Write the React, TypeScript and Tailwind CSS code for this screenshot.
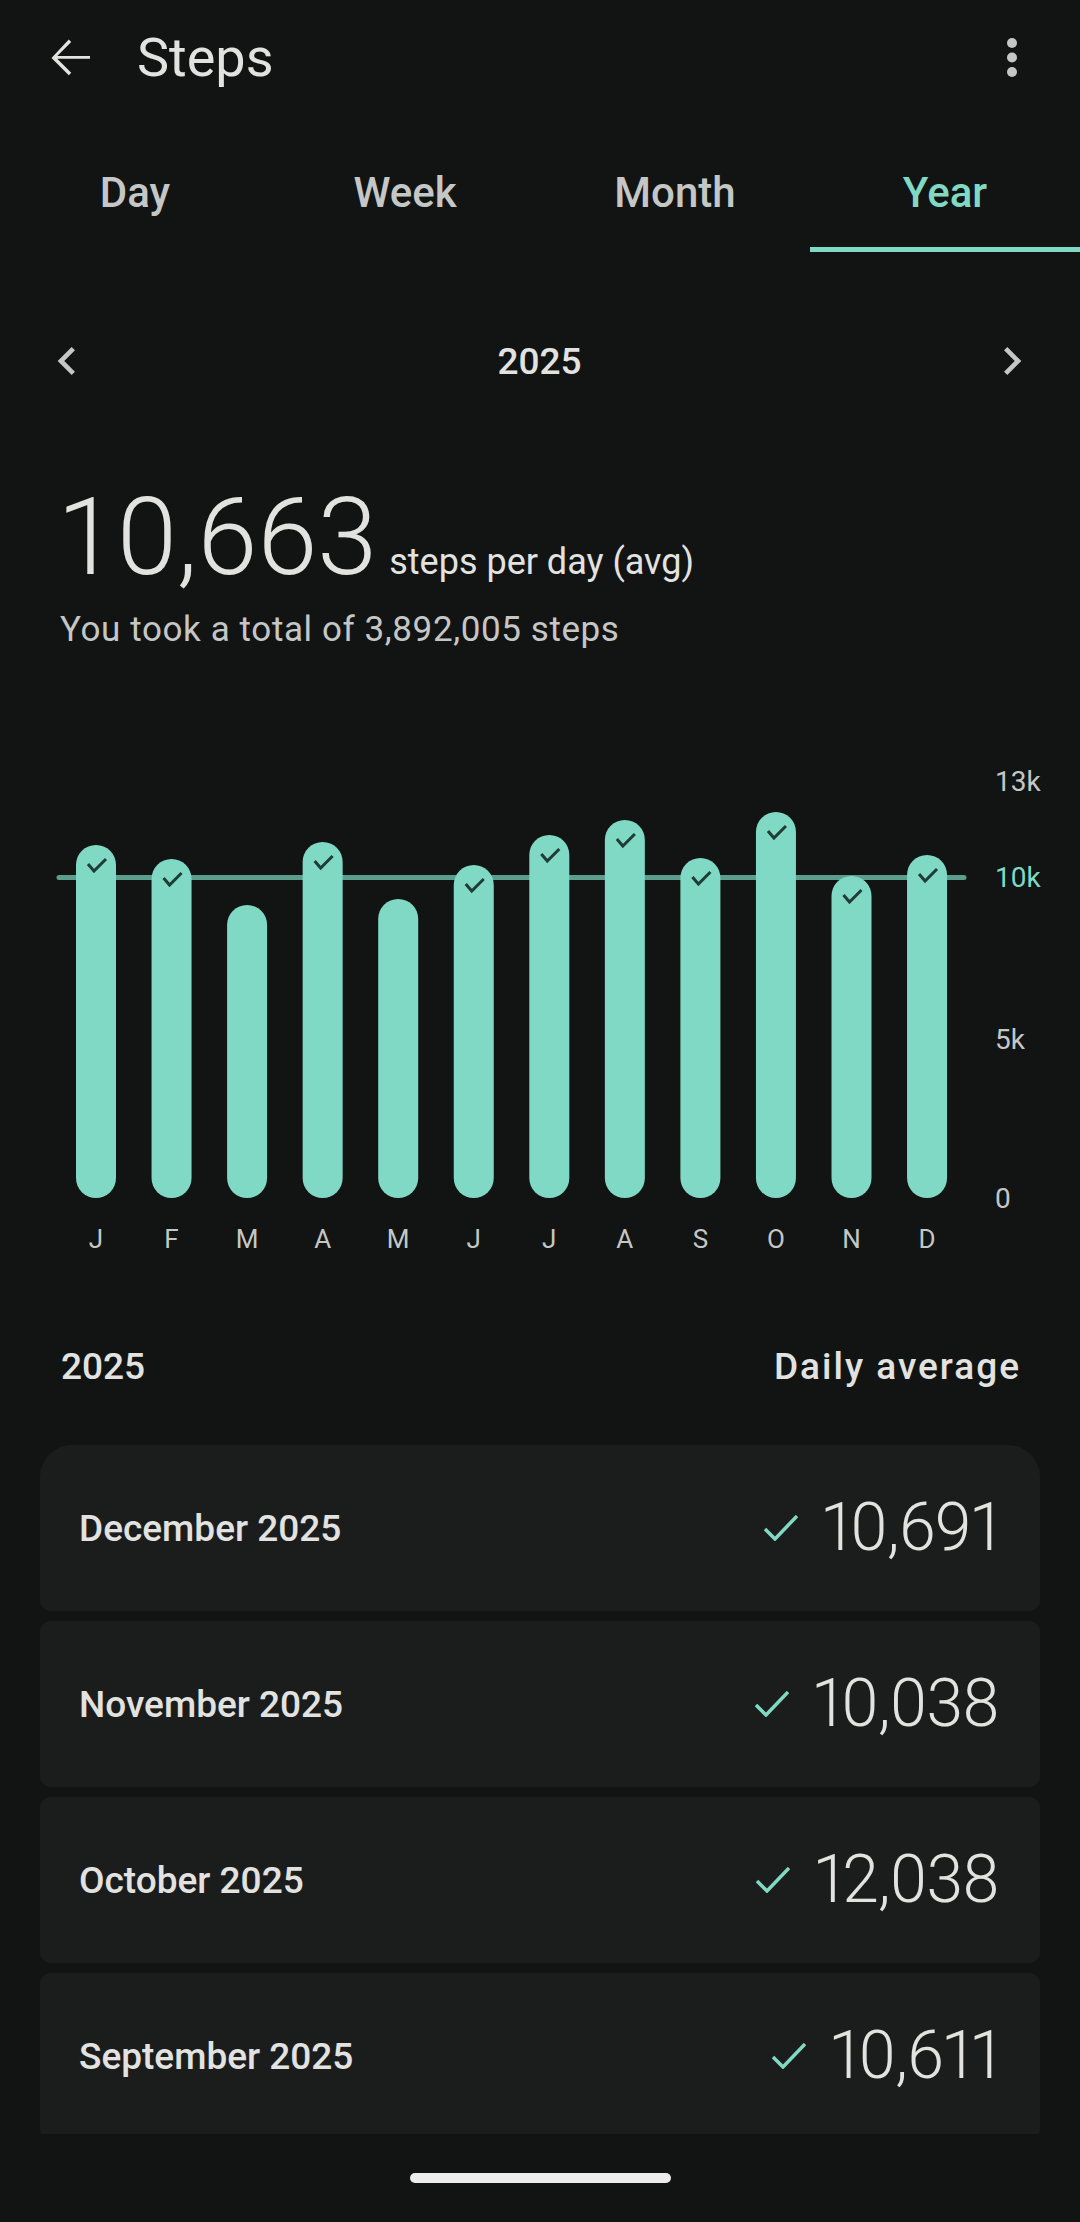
import React from "react";

const TEAL = "#80d9c4";

// bar tops in page px, chart svg starts at y=760
const months = [
  { m: "J", top: 844 },
  { m: "F", top: 858 },
  { m: "M", top: 904 },
  { m: "A", top: 841 },
  { m: "M", top: 898 },
  { m: "J", top: 864 },
  { m: "J", top: 834 },
  { m: "A", top: 819 },
  { m: "S", top: 857 },
  { m: "O", top: 811 },
  { m: "N", top: 875 },
  { m: "D", top: 854 },
];

const rows = [
  { label: "December 2025", value: "10,691", first: true },
  { label: "November 2025", value: "10,038" },
  { label: "October 2025", value: "12,038" },
  { label: "September 2025", value: "10,611" },
];

const tabs = ["Day", "Week", "Month", "Year"];

const Check = () => (
  <svg width="34" height="26" viewBox="0 0 34 26" fill="none">
    <polyline points="1,14 11,24 33,1" stroke={TEAL} strokeWidth="3.5" />
  </svg>
);

const Chart = () => {
  const y0 = 760;
  const base = 1197 - y0;
  const axis = [
    { t: "13k", y: 30, c: "#c4c7c5" },
    { t: "10k", y: 126, c: TEAL },
    { t: "5k", y: 288, c: "#c4c7c5" },
    { t: "0", y: 447, c: "#c4c7c5" },
  ];
  return (
    <svg width="1080" height="500" viewBox="0 0 1080 500" className="block">
      <line x1="59" y1="116.5" x2="964" y2="116.5" stroke="#5b9e8d" strokeWidth="5" strokeLinecap="round" />
      {months.map((b, i) => {
        const c = 96 + i * 75.55;
        const t = b.top - y0;
        const goal = b.top <= 876;
        return (
          <g key={i}>
            <rect x={c - 20} y={t} width="40" height={base - t} rx="20" fill={TEAL} />
            {goal && (
              <polyline
                points={`${c - 8},${t + 19} ${c - 2},${t + 26} ${c + 10},${t + 14}`}
                fill="none"
                stroke="#1f3d36"
                strokeWidth="3"
              />
            )}
            <text x={c} y="487" textAnchor="middle" fontSize="26" fill="#c4c7c5">
              {b.m}
            </text>
          </g>
        );
      })}
      {axis.map((a) => (
        <text key={a.t} x="995" y={a.y} fontSize="28" fill={a.c}>
          {a.t}
        </text>
      ))}
    </svg>
  );
};

export default function App() {
  return (
    <div className="w-[1080px] h-[2222px] bg-[#121413] text-[#e2e3e1] font-['Roboto',sans-serif] flex flex-col overflow-hidden">
      <div className="h-[2134px] shrink-0 overflow-hidden">
        {/* top bar */}
        <div className="h-[115px] flex items-center pl-[40px] pr-[39px]">
          <svg width="60" height="60" viewBox="0 0 24 24" fill="#e2e3e1">
            <path d="M20 11.2H6.9l5.6-5.6-1-1L4.6 12l6.9 6.9 1-1-5.6-5.6H20z" />
          </svg>
          <div className="ml-[37px] text-[54px] leading-none">Steps</div>
          <div className="flex-1" />
          <svg width="58" height="58" viewBox="0 0 58 58" fill="#c4c7c5">
            <circle cx="29" cy="14" r="5" />
            <circle cx="29" cy="28.5" r="5" />
            <circle cx="29" cy="43" r="5" />
          </svg>
        </div>

        {/* tabs */}
        <div className="grid grid-cols-4 h-[137px]">
          {tabs.map((t) => {
            const active = t === "Year";
            return (
              <div key={t} className="flex flex-col justify-end items-center">
                <div
                  className={`text-[42px] leading-[50px] font-medium ${active ? "text-[#80d9c4]" : "text-[#c4c7c5]"}`}
                >
                  {t}
                </div>
                <div className="h-[29px]" />
                <div className={`h-[5px] w-full ${active ? "bg-[#80d9c4]" : "bg-transparent"}`} />
              </div>
            );
          })}
        </div>

        {/* year nav */}
        <div className="mt-[79px] h-[60px] flex items-center justify-between pl-[39px] pr-[40px]">
          <svg width="56" height="56" viewBox="0 0 24 24" fill="#c4c7c5">
            <path d="M15.41 7.41L14 6l-6 6 6 6 1.41-1.41L10.83 12z" />
          </svg>
          <div className="text-[37px] font-medium leading-none">2025</div>
          <svg width="56" height="56" viewBox="0 0 24 24" fill="#c4c7c5">
            <path d="M10 6L8.59 7.41 13.17 12l-4.58 4.59L10 18l6-6z" />
          </svg>
        </div>

        {/* summary */}
        <div className="mt-[92px] pl-[57px] flex items-baseline">
          <span className="text-[108px] leading-none font-light">10,663</span>
          <span className="ml-[12px] text-[36px] leading-none">steps per day (avg)</span>
        </div>
        <div className="mt-[21px] pl-[60px] text-[35px] leading-none tracking-[0.6px] text-[#c4c7c5]">
          You took a total of 3,892,005 steps
        </div>

        {/* chart */}
        <div className="mt-[114px]">
          <Chart />
        </div>

        {/* list header */}
        <div className="mt-[81px] h-[50px] flex items-center justify-between pl-[61px] pr-[59px] text-[37px] font-medium">
          <span>2025</span>
          <span className="tracking-[2px]">Daily average</span>
        </div>

        <div className="mt-[53px] mx-[40px] flex flex-col gap-[10px]">
          {rows.map((r) => (
            <div
              key={r.label}
              className={`h-[166px] shrink-0 bg-[#1b1d1c] flex items-center pl-[39px] pr-[41px] ${
                r.first ? "rounded-t-[32px] rounded-b-[10px]" : "rounded-[10px]"
              }`}
            >
              <span className="text-[37px] font-medium leading-none">{r.label}</span>
              <div className="flex-1" />
              <Check />
              <span className="ml-[24px] text-[66px] font-light leading-none tracking-[-1px] proportional-nums">
                {r.value}
              </span>
            </div>
          ))}
        </div>
      </div>

      {/* gesture bar */}
      <div className="h-[88px] shrink-0 flex justify-center pt-[39px]">
        <div className="w-[261px] h-[10px] rounded-full bg-[#ececec]" />
      </div>
    </div>
  );
}
